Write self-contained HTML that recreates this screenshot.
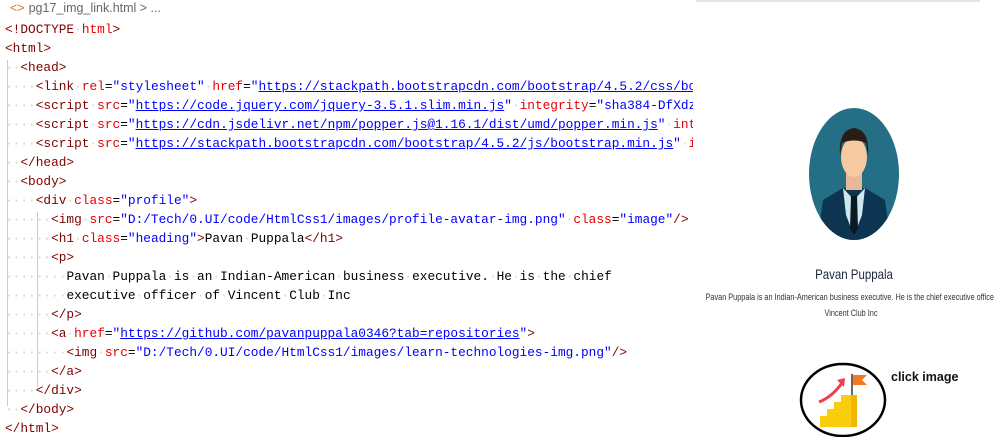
<!DOCTYPE html>
<html><head><style>
body{margin:0;width:994px;height:437px;overflow:hidden;background:#fff;position:relative;font-family:"Liberation Sans",sans-serif}
#code{position:absolute;left:0;top:0;width:693px;height:437px;overflow:hidden}
.bc{position:absolute;left:10px;top:1px;font-size:12.5px;color:#666}
.bc .i{color:#d07a2a;margin-right:4px}
pre{position:absolute;left:5px;top:20px;margin:0;font-family:"Liberation Mono",monospace;font-size:12.8px;line-height:19px;color:#000;white-space:pre}
.t{color:#800000}.a{color:#e50000}.s{color:#0000ff}.u{color:#0000ff;text-decoration:underline}
.d{color:#d4d4d4}
.g1{position:absolute;left:7px;top:60px;width:1px;height:346px;background:#ccc}
.g2{position:absolute;left:37px;top:212px;width:1px;height:175px;background:#ccc}
#topline{position:absolute;left:696px;top:0;width:284px;height:2px;background:#e4e4e4}
.h{position:absolute;left:854px;top:266px;white-space:nowrap;font-size:14px;color:#1d2540;transform:translateX(-50%) scaleX(.82)}
.p{position:absolute;left:851px;white-space:nowrap;font-size:8.8px;color:#333;transform:translateX(-50%) scaleX(.83)}
.ci{position:absolute;left:891px;top:370px;font-size:12.5px;font-weight:bold;color:#111}
</style></head><body>
<div id="code">
<div class="bc"><span class="i">&lt;&gt;</span>pg17_img_link.html &gt; ...</div>
<div class="g1"></div><div class="g2"></div>
<pre><span class="t">&lt;!DOCTYPE</span><span class="d">·</span><span class="a">html</span><span class="t">&gt;</span>
<span class="t">&lt;html&gt;</span>
<span class="d">··</span><span class="t">&lt;head&gt;</span>
<span class="d">····</span><span class="t">&lt;link</span><span class="d">·</span><span class="a">rel</span>=<span class="s">"stylesheet"</span><span class="d">·</span><span class="a">href</span>=<span class="s">"</span><span class="u">https://stackpath.bootstrapcdn.com/bootstrap/4.5.2/css/bootstrap.min.css</span>
<span class="d">····</span><span class="t">&lt;script</span><span class="d">·</span><span class="a">src</span>=<span class="s">"</span><span class="u">https://code.jquery.com/jquery-3.5.1.slim.min.js</span><span class="s">"</span><span class="d">·</span><span class="a">integrity</span>=<span class="s">"sha384-DfXdz2htPH0lsSSs5nCTpuj</span>
<span class="d">····</span><span class="t">&lt;script</span><span class="d">·</span><span class="a">src</span>=<span class="s">"</span><span class="u">https://cdn.jsdelivr.net/npm/popper.js@1.16.1/dist/umd/popper.min.js</span><span class="s">"</span><span class="d">·</span><span class="a">integrity</span>
<span class="d">····</span><span class="t">&lt;script</span><span class="d">·</span><span class="a">src</span>=<span class="s">"</span><span class="u">https://stackpath.bootstrapcdn.com/bootstrap/4.5.2/js/bootstrap.min.js</span><span class="s">"</span><span class="d">·</span><span class="a">integrity</span>
<span class="d">··</span><span class="t">&lt;/head&gt;</span>
<span class="d">··</span><span class="t">&lt;body&gt;</span>
<span class="d">····</span><span class="t">&lt;div</span><span class="d">·</span><span class="a">class</span>=<span class="s">"profile"</span><span class="t">&gt;</span>
<span class="d">······</span><span class="t">&lt;img</span><span class="d">·</span><span class="a">src</span>=<span class="s">"D:/Tech/0.UI/code/HtmlCss1/images/profile-avatar-img.png"</span><span class="d">·</span><span class="a">class</span>=<span class="s">"image"</span><span class="t">/&gt;</span>
<span class="d">······</span><span class="t">&lt;h1</span><span class="d">·</span><span class="a">class</span>=<span class="s">"heading"</span><span class="t">&gt;</span>Pavan<span class="d">·</span>Puppala<span class="t">&lt;/h1&gt;</span>
<span class="d">······</span><span class="t">&lt;p&gt;</span>
<span class="d">········</span>Pavan<span class="d">·</span>Puppala<span class="d">·</span>is<span class="d">·</span>an<span class="d">·</span>Indian-American<span class="d">·</span>business<span class="d">·</span>executive.<span class="d">·</span>He<span class="d">·</span>is<span class="d">·</span>the<span class="d">·</span>chief
<span class="d">········</span>executive<span class="d">·</span>officer<span class="d">·</span>of<span class="d">·</span>Vincent<span class="d">·</span>Club<span class="d">·</span>Inc
<span class="d">······</span><span class="t">&lt;/p&gt;</span>
<span class="d">······</span><span class="t">&lt;a</span><span class="d">·</span><span class="a">href</span>=<span class="s">"</span><span class="u">https://github.com/pavanpuppala0346?tab=repositories</span><span class="s">"</span><span class="t">&gt;</span>
<span class="d">········</span><span class="t">&lt;img</span><span class="d">·</span><span class="a">src</span>=<span class="s">"D:/Tech/0.UI/code/HtmlCss1/images/learn-technologies-img.png"</span><span class="t">/&gt;</span>
<span class="d">······</span><span class="t">&lt;/a&gt;</span>
<span class="d">····</span><span class="t">&lt;/div&gt;</span>
<span class="d">··</span><span class="t">&lt;/body&gt;</span>
<span class="t">&lt;/html&gt;</span></pre>
</div>
<div id="topline"></div>
<svg style="position:absolute;left:0;top:0" width="994" height="437">
<defs><clipPath id="av"><ellipse cx="854" cy="174" rx="45" ry="66"/></clipPath></defs>
<ellipse cx="854" cy="174" rx="45" ry="66" fill="#246f85"/>
<g clip-path="url(#av)">
<path d="M823 200 L843 188 L865 188 L885 200 L892 250 L816 250 Z" fill="#0d3551"/>
<path d="M843 188 L854 200 L865 188 L862 215 L854 236 L846 215 Z" fill="#cde6f0"/>
<path d="M851 196 L857 196 L858 228 L854 236 L850 228 Z" fill="#0b1a22"/>
<rect x="846" y="170" width="16" height="20" fill="#e9b896"/>
<ellipse cx="854" cy="157" rx="13" ry="20" fill="#f6caa0"/>
<path d="M840 156 Q838 130 854 128 Q870 130 868 156 L866 143 Q854 138 842 143 Z" fill="#2a1d17"/>
</g>
<ellipse cx="843" cy="400" rx="42" ry="36" fill="none" stroke="#000" stroke-width="2.5"/>
<path d="M820 427 L820 416 L827 416 L827 409 L834 409 L834 402 L841 402 L841 395 L857 395 L857 427 Z" fill="#f9cc0c"/>
<rect x="851" y="395" width="6" height="32" fill="#f2b600"/>
<rect x="851" y="374" width="2" height="21" fill="#666"/>
<path d="M853 375 L867 375 L862 380 L867 385 L853 385 Z" fill="#f57a1f"/>
<path d="M819 402 Q832 397 842 383" stroke="#ef3e52" stroke-width="3" fill="none"/>
<path d="M837 380 L845 378 L844 387 Z" fill="#ef3e52"/>
</svg>
<div class="h">Pavan Puppala</div>
<div class="p" style="top:292px">Pavan Puppala is an Indian-American business executive. He is the chief executive officer</div>
<div class="p" style="top:308px">Vincent Club Inc</div>
<div class="ci">click image</div>
</body></html>
